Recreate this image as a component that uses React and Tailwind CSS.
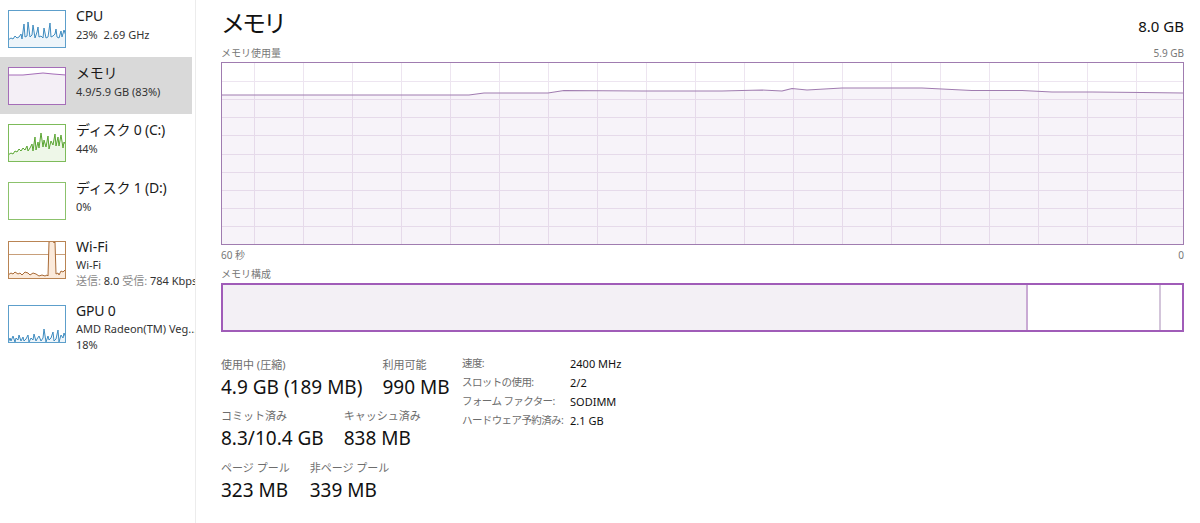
import React from "react";

const cpuPts = "0,30 3,28 5,29 7,26 9,28 11,27 13,24 14,29 16,14 17,27 19,26 20,12 22,27 24,25 25,15 27,28 29,22 30,17 31,27 33,26 35,28 36,18 38,28 40,27 42,13 43,27 45,26 47,24 48,19 49,27 51,28 53,21 54,27 56,20 58,26";
const diskPts = "0,31 3,29 5,30 7,27 9,28 11,25 13,27 15,24 17,26 19,22 20,27 22,24 24,20 25,27 27,13 28,26 30,18 31,24 33,9 35,23 36,16 38,23 40,12 41,25 43,17 45,21 47,10 48,22 50,13 51,22 53,11 55,24 56,18 58,21";
const gpuPts = "0,38 2,33 3,36 5,31 7,37 8,33 10,35 11,30 13,36 15,32 16,36 18,34 20,30 21,37 23,33 25,35 26,29 28,36 29,34 31,31 33,36 35,33 36,24 38,37 40,31 41,35 43,33 45,27 46,36 48,34 50,25 51,37 53,30 55,33 56,28 58,33";
const wifiPts = "0,34 3,32 5,33 7,31 10,33 12,32 14,34 17,31 20,32 22,34 25,32 28,33 31,35 34,34 37,35 39,34 40,35 41,1 43,0 45,0 46,2 47,1 48,33 50,32 51,34 53,30 55,31 57,29 58,33";

function Thumb({ color, children }) {
  return (
    <svg width="58" height="38" viewBox="0 0 58 38" className="shrink-0 block">
      <rect x="0.5" y="0.5" width="57" height="37" fill="#ffffff" />
      {children}
      <rect x="0.5" y="0.5" width="57" height="37" fill="none" stroke={color} strokeWidth="1" />
    </svg>
  );
}

function Item({ h, selected, thumb, title, children }) {
  return (
    <div className={`flex pl-2 pt-[10px] gap-[10px] ${h} ${selected ? "bg-[#d9d9d9] mr-[3px]" : ""}`}>
      {thumb}
      <div className="flex flex-col -mt-[3px] min-w-0 whitespace-nowrap">
        <div className="text-[14px] leading-[18px] text-[#1a1a1a] tracking-[-0.2px]">{title}</div>
        <div className="text-[11px] leading-[17px] text-[#333333] mt-[1px]">{children}</div>
      </div>
    </div>
  );
}

const chartLine = [
  [0, 32], [247, 32], [262, 30], [326, 30], [342, 27.5], [420, 28], [500, 28], [540, 27], [560, 28],
  [570, 25.5], [585, 27], [620, 25], [700, 25], [720, 26], [750, 27.5], [800, 27.5], [830, 29],
  [870, 29], [920, 29.5], [961, 30],
];

function Stat({ label, value }) {
  return (
    <div className="flex flex-col">
      <div className="text-[11px] leading-[14px] text-[#6d6d6d] whitespace-nowrap">{label}</div>
      <div className="text-[19px] leading-[30px] text-[#111] whitespace-nowrap">{value}</div>
    </div>
  );
}

export default function App() {
  const W = 961;
  const H = 181;
  const vLines = [];
  for (let x = 32; x < W; x += 49) vLines.push(x);
  const hLines = [];
  for (let i = 1; i < 10; i++) hLines.push(Math.round((H * i) / 10) + 0.5);
  const linePts = chartLine.map((p) => p.join(",")).join(" ");
  const areaPts = `0,${H} ${linePts} ${W},${H}`;

  return (
    <div className="w-[1200px] h-[523px] flex bg-white overflow-hidden font-['Noto_Sans','Noto_Sans_CJK_JP',sans-serif] text-[#1a1a1a]">
      {/* Sidebar */}
      <div className="w-[196px] shrink-0 border-r border-[#ececec] overflow-hidden flex flex-col">
        <Item
          h="h-[57px]"
          title="CPU"
          thumb={
            <Thumb color="#5d9fcb">
              <polygon points={`0,38 ${cpuPts} 58,38`} fill="#eef5fa" />
              <polyline points={cpuPts} fill="none" stroke="#3f8cc0" strokeWidth="1" />
            </Thumb>
          }
        >
          23%&nbsp; 2.69 GHz
        </Item>
        <Item
          h="h-[57px]"
          selected
          title="メモリ"
          thumb={
            <Thumb color="#a56db8">
              <polygon points="0,38 0,8 15,8 25,7 35,6 45,7 58,8 58,38" fill="#f4eff6" />
              <polyline points="0,8 15,8 25,7 35,6 45,7 58,8" fill="none" stroke="#a56db8" strokeWidth="1" />
            </Thumb>
          }
        >
          4.9/5.9 GB (83%)
        </Item>
        <Item
          h="h-[58px]"
          title="ディスク 0 (C:)"
          thumb={
            <Thumb color="#7dbb5a">
              <polygon points={`0,38 ${diskPts} 58,38`} fill="#eef7e8" />
              <polyline points={diskPts} fill="none" stroke="#5aa532" strokeWidth="1" />
            </Thumb>
          }
        >
          44%
        </Item>
        <Item h="h-[57px]" title="ディスク 1 (D:)" thumb={<Thumb color="#8cc26c" />}>
          0%
        </Item>
        <div className="flex pl-2 pt-[12px] gap-[10px] h-[66px]">
          <Thumb color="#b98453">
            <line x1="0" y1="13.5" x2="58" y2="13.5" stroke="#c89f7a" strokeWidth="1" />
            <polygon points={`0,38 ${wifiPts} 58,38`} fill="#fbeadb" />
            <polyline points={wifiPts} fill="none" stroke="#a86a36" strokeWidth="1" />
          </Thumb>
          <div className="flex flex-col -mt-[3px] whitespace-nowrap">
            <div className="text-[14px] leading-[18px]">Wi-Fi</div>
            <div className="text-[11px] leading-[16px] text-[#333] mt-[1px]">Wi-Fi</div>
            <div className="text-[11px] leading-[16px] text-[#333]">
              <span className="text-[#8a8a8a]">送信:</span> 8.0 <span className="text-[#8a8a8a]">受信:</span> 784 Kbps
            </div>
          </div>
        </div>
        <Item
          h="h-[60px]"
          title="GPU 0"
          thumb={
            <Thumb color="#5d9fcb">
              <polygon points={`0,38 ${gpuPts} 58,38`} fill="#eef5fa" />
              <polyline points={gpuPts} fill="none" stroke="#3f8cc0" strokeWidth="1" />
            </Thumb>
          }
        >
          <div className="leading-[16px]">AMD Radeon(TM) Veg...</div>
          <div className="leading-[16px]">18%</div>
        </Item>
      </div>

      {/* Main */}
      <div className="flex-1 pl-[25px] pr-[16px] flex flex-col">
        <div className="flex items-baseline justify-between h-[45px] pt-[6px]">
          <div className="text-[24px] leading-[34px] text-[#111] tracking-[-3px]">メモリ</div>
          <div className="text-[15px] leading-[20px] text-[#111]">8.0 GB</div>
        </div>
        <div className="flex justify-between text-[10px] leading-[16px] text-[#777] h-[17px]">
          <span>メモリ使用量</span>
          <span>5.9 GB</span>
        </div>
        <div className="h-[183px] border border-[#a07cb0]">
          <svg width={W} height={H} viewBox={`0 0 ${W} ${H}`} className="block">
            {vLines.map((x) => (
              <line key={"v" + x} x1={x + 0.5} y1="0" x2={x + 0.5} y2={H} stroke="#ede5f0" strokeWidth="1" />
            ))}
            {hLines.map((y) => (
              <line key={"h" + y} x1="0" y1={y} x2={W} y2={y} stroke="#ede5f0" strokeWidth="1" />
            ))}
            <polygon points={areaPts} fill="#7a2f96" fillOpacity="0.06" />
            <polyline points={linePts} fill="none" stroke="#a07cb0" strokeWidth="1.2" />
          </svg>
        </div>
        <div className="flex justify-between text-[10px] leading-[18px] text-[#777] mt-[1px]">
          <span>60 秒</span>
          <span>0</span>
        </div>
        <div className="text-[10px] leading-[18px] text-[#777] mt-[1px]">メモリ構成</div>
        <div className="h-[49px] border-2 border-[#a05cb8] flex">
          <div className="w-[805px] bg-[#f3f0f5] border-r-2 border-[#c9aad4]" />
          <div className="w-[133px] bg-white border-r-2 border-[#d3c5da]" />
          <div className="flex-1 bg-white" />
        </div>

        <div className="flex mt-[26px]">
          <div className="w-[241px] shrink-0 flex flex-col">
            <div className="flex gap-5">
              <Stat label="使用中 (圧縮)" value="4.9 GB (189 MB)" />
              <Stat label="利用可能" value="990 MB" />
            </div>
            <div className="flex gap-5 mt-[7px]">
              <Stat label="コミット済み" value="8.3/10.4 GB" />
              <Stat label="キャッシュ済み" value="838 MB" />
            </div>
            <div className="flex gap-5 mt-[8px]">
              <Stat label="ページ プール" value="323 MB" />
              <Stat label="非ページ プール" value="339 MB" />
            </div>
          </div>
          <div className="grid grid-cols-[108px_auto] text-[11px] leading-[19px] -mt-[4px] h-fit whitespace-nowrap">
            <div className="text-[#6d6d6d] text-[10.5px] tracking-[-0.6px]">速度:</div>
            <div className="text-[#111]">2400 MHz</div>
            <div className="text-[#6d6d6d] text-[10.5px] tracking-[-0.6px]">スロットの使用:</div>
            <div className="text-[#111]">2/2</div>
            <div className="text-[#6d6d6d] text-[10.5px] tracking-[-0.6px]">フォーム ファクター:</div>
            <div className="text-[#111]">SODIMM</div>
            <div className="text-[#6d6d6d] text-[10.5px] tracking-[-0.6px]">ハードウェア予約済み:</div>
            <div className="text-[#111]">2.1 GB</div>
          </div>
        </div>
      </div>
    </div>
  );
}
